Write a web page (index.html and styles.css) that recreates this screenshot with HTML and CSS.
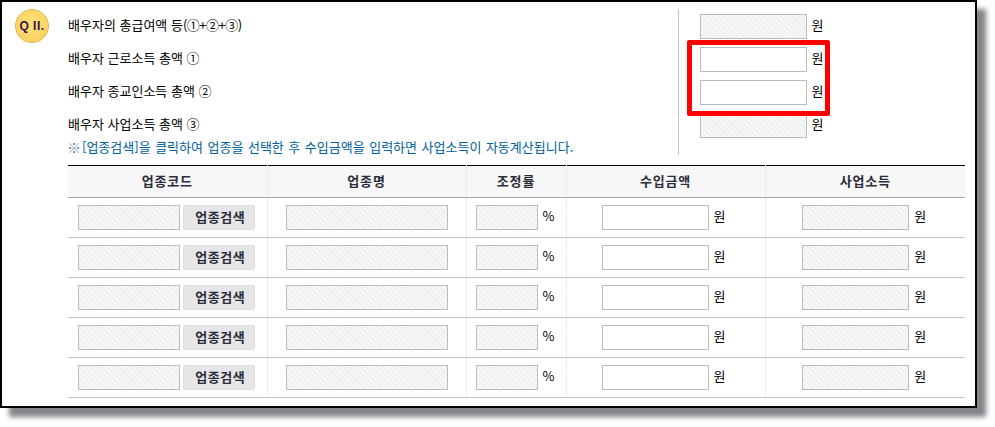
FILE: index.html
```html
<!DOCTYPE html>
<html lang="ko">
<head>
<meta charset="utf-8">
<title>배우자 소득</title>
<link rel="stylesheet" href="styles.css">
</head>
<body>
<div class="frame">
  <div class="top">
    <div class="badge">Q II.</div>
    <div class="labels">
      <div class="row"><span>배우자의 총급여액 등<span class="sum">(①+②+③)</span></span></div>
      <div class="row">배우자 근로소득 총액 ①</div>
      <div class="row">배우자 종교인소득 총액 ②</div>
      <div class="row">배우자 사업소득 총액 ③</div>
      <div class="note"><span class="mark">※</span><span>[업종검색]을 클릭하여 업종을 선택한 후 수입금액을 입력하면 사업소득이 자동계산됩니다.</span></div>
    </div>
    <div class="amounts">
      <div class="row"><span class="field hatch w107"></span><span class="unit">원</span></div>
      <div class="row"><span class="field w107"></span><span class="unit">원</span></div>
      <div class="row"><span class="field w107"></span><span class="unit">원</span></div>
      <div class="row"><span class="field hatch w107"></span><span class="unit">원</span></div>
    </div>
  </div>
  <table class="grid">
    <colgroup><col class="c1"><col class="c1"><col class="c2"><col class="c1"><col class="c3"></colgroup>
    <thead>
      <tr><th>업종코드</th><th>업종명</th><th>조정률</th><th>수입금액</th><th>사업소득</th></tr>
    </thead>
    <tbody>
      <tr>
        <td><div class="cell code"><span class="field hatch w102"></span><span class="btn">업종검색</span></div></td>
        <td><div class="cell"><span class="field hatch w162"></span></div></td>
        <td><div class="cell"><span class="field hatch w62"></span><span class="unit pct">%</span></div></td>
        <td><div class="cell"><span class="field w107"></span><span class="unit">원</span></div></td>
        <td><div class="cell income"><span class="field hatch w107"></span><span class="unit">원</span></div></td>
      </tr>
      <tr>
        <td><div class="cell code"><span class="field hatch w102"></span><span class="btn">업종검색</span></div></td>
        <td><div class="cell"><span class="field hatch w162"></span></div></td>
        <td><div class="cell"><span class="field hatch w62"></span><span class="unit pct">%</span></div></td>
        <td><div class="cell"><span class="field w107"></span><span class="unit">원</span></div></td>
        <td><div class="cell income"><span class="field hatch w107"></span><span class="unit">원</span></div></td>
      </tr>
      <tr>
        <td><div class="cell code"><span class="field hatch w102"></span><span class="btn">업종검색</span></div></td>
        <td><div class="cell"><span class="field hatch w162"></span></div></td>
        <td><div class="cell"><span class="field hatch w62"></span><span class="unit pct">%</span></div></td>
        <td><div class="cell"><span class="field w107"></span><span class="unit">원</span></div></td>
        <td><div class="cell income"><span class="field hatch w107"></span><span class="unit">원</span></div></td>
      </tr>
      <tr>
        <td><div class="cell code"><span class="field hatch w102"></span><span class="btn">업종검색</span></div></td>
        <td><div class="cell"><span class="field hatch w162"></span></div></td>
        <td><div class="cell"><span class="field hatch w62"></span><span class="unit pct">%</span></div></td>
        <td><div class="cell"><span class="field w107"></span><span class="unit">원</span></div></td>
        <td><div class="cell income"><span class="field hatch w107"></span><span class="unit">원</span></div></td>
      </tr>
      <tr>
        <td><div class="cell code"><span class="field hatch w102"></span><span class="btn">업종검색</span></div></td>
        <td><div class="cell"><span class="field hatch w162"></span></div></td>
        <td><div class="cell"><span class="field hatch w62"></span><span class="unit pct">%</span></div></td>
        <td><div class="cell"><span class="field w107"></span><span class="unit">원</span></div></td>
        <td><div class="cell income"><span class="field hatch w107"></span><span class="unit">원</span></div></td>
      </tr>
    </tbody>
  </table>
  <div class="highlight"></div>
</div>
</body>
</html>
```

FILE: styles.css
```css
* { box-sizing: border-box; }
html, body { margin: 0; padding: 0; background: #fff; }
body {
  width: 995px;
  height: 427px;
  overflow: hidden;
  font-family: "Noto Sans CJK KR", "Liberation Sans", sans-serif;
  font-size: 13px;
  color: #000;
}
.frame {
  position: relative;
  width: 977px;
  height: 408px;
  border: 2px solid #000;
  padding: 7px 10px 0 13px;
  background: #fff;
  box-shadow: 9px 9px 5px #84848a;
}
.top { display: flex; height: 156px; }
.badge {
  flex: none;
  width: 34px;
  height: 34px;
  margin-right: 19px;
  border-radius: 50%;
  background: radial-gradient(circle at 50% 40%, #ffe07a, #fbcf58);
  border: 1px solid #e2b552;
  display: flex;
  align-items: center;
  justify-content: center;
  font-family: "Liberation Sans", sans-serif;
  font-weight: 700;
  font-size: 12px;
  letter-spacing: .5px;
  color: #3a1050;
  white-space: nowrap;
}
.labels { width: 611px; }
.row { height: 33px; display: flex; align-items: center; }
.labels .row { padding-bottom: 2px; }
.sum { letter-spacing: -.5px; }
.note {
  display: flex;
  align-items: center;
  color: #00609c;
  margin: -1px 0 0 -1px;
  line-height: 14px;
  white-space: nowrap;
  word-spacing: .9px;
}
.mark { font-size: 14px; margin-right: 1px; color: #5f84a0; }
.amounts {
  width: 288px;
  height: 146px;
  padding: 1px 0 0 21px;
  border-left: 1px solid #c4c4c4;
}
.field {
  display: block;
  flex: none;
  height: 25px;
  border: 1px solid #bbb;
  background: #fff;
}
.hatch {
  background: repeating-linear-gradient(45deg, #f6f6f6 0, #f6f6f6 3px, #ececec 3px, #ececec 4px);
}
.w107 { width: 107px; }
.w102 { width: 102px; }
.w162 { width: 162px; }
.w62 { width: 62px; }
.unit { margin: 0 0 4px 5px; width: 16px; flex: none; }
.pct { width: 14px; }
.grid {
  margin-left: 53px;
  width: 897px;
  table-layout: fixed;
  border-collapse: collapse;
  border-top: 1px solid #000;
}
.c1 { width: 199px; }
.c2 { width: 100px; }
.c3 { width: 200px; }
th {
  height: 32px;
  padding: 0 0 3px;
  background: #f7f7f7;
  border-bottom: 1px solid #a5a5a5;
  border-right: 1px solid #ececec;
  font-weight: 700;
  font-size: 13px;
  letter-spacing: .8px;
  color: #2c2c3a;
}
td {
  height: 40px;
  padding: 0;
  border-bottom: 1px solid #c4c4c4;
  border-right: 1px solid #ececec;
}
th:last-child, td:last-child { border-right: 0; }
.cell { display: flex; align-items: center; justify-content: center; }
.code { padding-right: 2px; }
.income { padding-left: 2px; }
.btn {
  flex: none;
  width: 72px;
  height: 25px;
  margin-left: 3px;
  padding: 0 0 2px 3px;
  background: #e6e6e6;
  border: 1px solid #dcdcdc;
  border-radius: 2px;
  display: flex;
  align-items: center;
  justify-content: center;
  font-weight: 700;
  letter-spacing: .5px;
  color: #2c2c3a;
}
.highlight {
  position: absolute;
  left: 685px;
  top: 38px;
  width: 143px;
  height: 76px;
  border: 5px solid #f00;
  border-radius: 2px;
}
```
